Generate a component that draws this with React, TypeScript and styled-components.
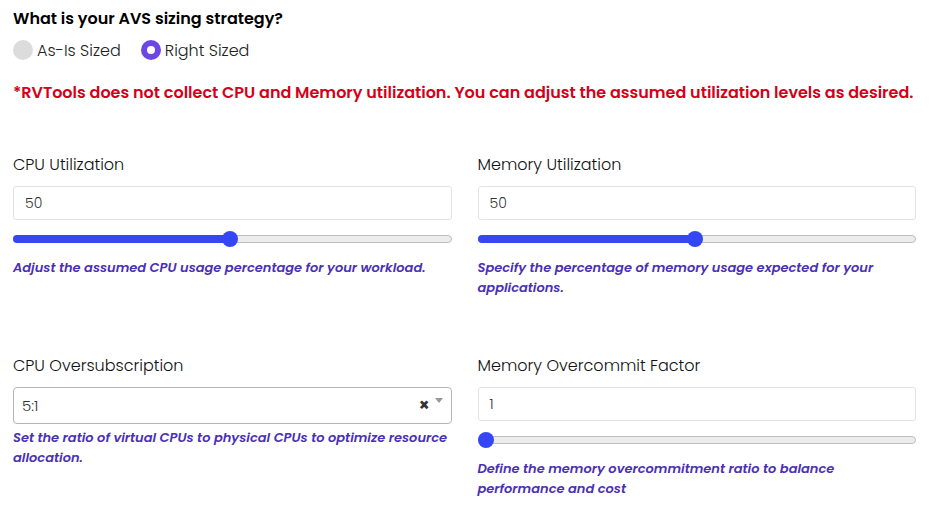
import styled, { createGlobalStyle } from 'styled-components'

const GlobalStyle = createGlobalStyle`
  html, body {
    margin: 0;
    padding: 0;
    background: #fff;
  }
  body {
    font-family: 'Poppins', 'Open Sans', sans-serif;
    color: #111;
  }
  * {
    box-sizing: border-box;
  }
`

const Page = styled.div`
  padding: 7px 23px 20px 13px;
`

const Question = styled.div`
  font-size: 16px;
  line-height: 24px;
  font-weight: 600;
  color: #000;
`

const RadioGroup = styled.div`
  display: flex;
  gap: 8px;
  margin-top: 7px;
  height: 24px;
  align-items: center;
`

const RadioOption = styled.label`
  display: flex;
  align-items: center;
  gap: 4px;
  font-size: 16px;
  font-weight: 300;
  color: #222;
  cursor: pointer;
  margin-right: 12px;
`

const RadioDot = styled.span<{ $checked?: boolean }>`
  width: 20px;
  height: 20px;
  border-radius: 50%;
  background: ${({ $checked }) => ($checked ? '#6c47e6' : '#dcdcdc')};
  display: flex;
  align-items: center;
  justify-content: center;

  &::after {
    content: '';
    width: 8px;
    height: 8px;
    border-radius: 50%;
    background: #fff;
    display: ${({ $checked }) => ($checked ? 'block' : 'none')};
  }
`

const Warning = styled.div`
  margin-top: 19px;
  font-size: 16px;
  line-height: 24px;
  font-weight: 600;
  color: #d4001a;
`

const Grid = styled.div`
  display: grid;
  grid-template-columns: 1fr 1fr;
  column-gap: 26px;
  row-gap: 56px;
  margin-top: 48px;
`

const Field = styled.div`
  display: flex;
  flex-direction: column;
`

const Label = styled.div`
  font-size: 16px;
  line-height: 24px;
  font-weight: 300;
  color: #111;
  margin-bottom: 9px;
`

const TextInput = styled.div`
  height: 34px;
  border: 1px solid #e2e2e8;
  border-radius: 3px;
  padding: 0 11px;
  display: flex;
  align-items: center;
  font-size: 14px;
  font-weight: 300;
  color: #333;
`

const SelectBox = styled.div`
  height: 37px;
  border: 1px solid #b5b5b5;
  border-radius: 4px;
  padding: 0 8px;
  display: flex;
  align-items: center;
  font-size: 15px;
  font-weight: 300;
  color: #333;
`

const SelectValue = styled.span`
  flex: 1;
`

const ClearIcon = styled.span`
  font-size: 17px;
  font-weight: 700;
  color: #333;
  margin-right: 5px;
  line-height: 1;
`

const Caret = styled.span`
  width: 0;
  height: 0;
  border-left: 4px solid transparent;
  border-right: 4px solid transparent;
  border-top: 5px solid #999;
  align-self: flex-start;
  margin-top: 10px;
`

const SliderWrap = styled.div`
  position: relative;
  height: 16px;
  margin-top: 11px;
  display: flex;
  align-items: center;
`

const Track = styled.div`
  position: relative;
  width: 100%;
  height: 8px;
  border-radius: 4px;
  background: #ececec;
  border: 1px solid #bdbdbd;
`

const Fill = styled.div`
  position: absolute;
  left: -1px;
  top: -1px;
  bottom: -1px;
  border-radius: 4px;
  background: #3547f5;
`

const Thumb = styled.div`
  position: absolute;
  top: 0;
  width: 16px;
  height: 16px;
  border-radius: 50%;
  background: #3547f5;
  transform: translateX(-50%);
`

const Help = styled.div<{ $tight?: boolean }>`
  margin-top: ${({ $tight }) => ($tight ? '4px' : '11px')};
  font-size: 13px;
  line-height: 20px;
  font-weight: 600;
  font-style: italic;
  color: #4a30b4;
`

const Slider = ({ value, min, max }: { value: number; min: number; max: number }) => {
  const p = (value - min) / (max - min)
  const pos = `calc(8px + (100% - 16px) * ${p * 0.99})`
  return (
    <SliderWrap>
      <Track>{p > 0 && <Fill style={{ width: pos }} />}</Track>
      <Thumb style={{ left: pos }} />
    </SliderWrap>
  )
}

export default function App() {
  return (
    <Page>
      <GlobalStyle />
      <Question>What is your AVS sizing strategy?</Question>
      <RadioGroup>
        <RadioOption>
          <RadioDot />
          As-Is Sized
        </RadioOption>
        <RadioOption>
          <RadioDot $checked />
          Right Sized
        </RadioOption>
      </RadioGroup>
      <Warning>
        *RVTools does not collect CPU and Memory utilization. You can adjust the assumed
        utilization levels as desired.
      </Warning>
      <Grid>
        <Field>
          <Label>CPU Utilization</Label>
          <TextInput>50</TextInput>
          <Slider value={50} min={0} max={100} />
          <Help>Adjust the assumed CPU usage percentage for your workload.</Help>
        </Field>
        <Field>
          <Label>Memory Utilization</Label>
          <TextInput>50</TextInput>
          <Slider value={50} min={0} max={100} />
          <Help>Specify the percentage of memory usage expected for your applications.</Help>
        </Field>
        <Field>
          <Label>CPU Oversubscription</Label>
          <SelectBox>
            <SelectValue>5:1</SelectValue>
            <ClearIcon>×</ClearIcon>
            <Caret />
          </SelectBox>
          <Help $tight>
            Set the ratio of virtual CPUs to physical CPUs to optimize resource allocation.
          </Help>
        </Field>
        <Field>
          <Label>Memory Overcommit Factor</Label>
          <TextInput>1</TextInput>
          <Slider value={1} min={1} max={10} />
          <Help>Define the memory overcommitment ratio to balance performance and cost</Help>
        </Field>
      </Grid>
    </Page>
  )
}
